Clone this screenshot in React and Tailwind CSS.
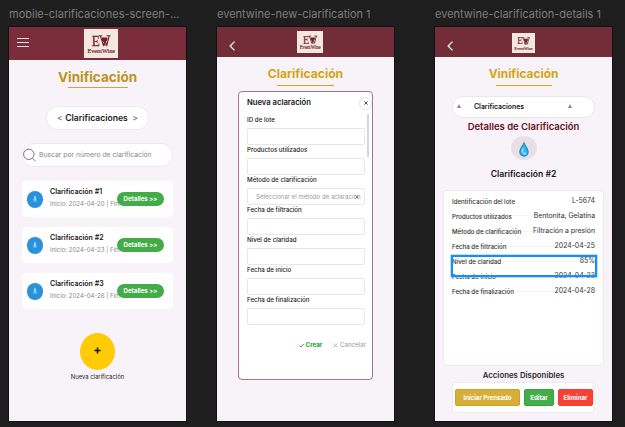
import React from "react";

function Logo({ className }) {
  return (
    <svg viewBox="0 0 34 29" preserveAspectRatio="none" className={className}>
      <rect width="34" height="29" fill="#f3e8df" />
      <text x="7.800" y="16.500" fontSize="15.500" fontFamily="Liberation Serif, serif" fill="#74202f" stroke="#74202f" strokeWidth=".3" textLength="8" lengthAdjust="spacingAndGlyphs">E</text>
      <path d="M14.800 6.700h3.500M22.500 6.700h4M16.300 6.700l3 9.500L21 12l1.800 4.200L25.300 6.700" fill="none" stroke="#74202f" strokeWidth="1.100" />
      <path d="M17.800 8.500h5.600c.5 3-.9 4.300-2.200 4.700v2.500h1v.8h-3.200v-.8h1v-2.500c-1.300-.4-2.700-1.700-2.200-4.700z" fill="#74202f" />
      <text x="3.500" y="24.300" fontSize="6.800" fontFamily="Liberation Serif, serif" fill="#74202f" stroke="#74202f" strokeWidth=".2" textLength="27.500" lengthAdjust="spacingAndGlyphs">EventWine</text>
    </svg>
  );
}

function Back() {
  return (
    <svg viewBox="0 0 6 10" className="mt-[14px] ml-[12px] mr-[1px] h-[10px] w-[6px]">
      <path d="M5.500 .6L1.100 5l4.400 4.400" fill="none" stroke="#fff" strokeWidth="1.200" />
    </svg>
  );
}

function Frame({ label, children }) {
  return (
    <section className="w-[177px] shrink-0">
      <div className="flex h-[27px] items-center pt-px text-[11px] whitespace-nowrap text-[#7d7d7d]">{label}</div>
      <div className="flex h-[394px] flex-col overflow-hidden bg-[#f8f2f9] shadow-[0_0_0_1px_#111]">{children}</div>
    </section>
  );
}

function Title({ children, className, line }) {
  return (
    <>
      <h1 className={"text-center font-bold whitespace-nowrap " + className}>{children}</h1>
      <div className={"mx-auto h-px shrink-0 " + line} />
    </>
  );
}

function ListCard({ n, date }) {
  return (
    <article className="flex h-[36px] items-center rounded-[5px] bg-white pl-[5px]">
      <div className="flex h-[17px] w-[16px] shrink-0 items-center justify-center rounded-full bg-[#2b91da]">
        <svg viewBox="0 0 6 9" className="mb-[1px] h-[9px] w-[6px]">
          <path d="M3 .5C3.300 3 5 4.500 5 6.200a2 2 0 0 1-4 0C1 4.500 2.700 3 3 .5z" fill="#49b8f5" />
          <path d="M3 2.200v4.300" stroke="#e3f7ff" strokeWidth=".9" />
        </svg>
      </div>
      <div className="mb-[3px] ml-[7px] w-[67px] shrink-0 whitespace-nowrap">
        <div className="h-[12px] text-[7px] leading-[11px] font-semibold text-[#151515]">Clarificación #{n}</div>
        <div className="h-[12px] text-[6.100px] leading-[12px] text-[#888]">Inicio: {date} | Fin:</div>
      </div>
      <button className="relative h-[14px] w-[47px] shrink-0 rounded-full bg-[#43ac49] text-[6.100px] font-bold text-white">Detalles &gt;&gt;</button>
    </article>
  );
}

function ListScreen() {
  return (
    <>
      <header className="flex h-[33px] shrink-0 bg-[#7b2d3b]">
        <div className="mt-[11px] ml-[8px] flex h-[9px] w-[12px] flex-col justify-between">
          <i className="h-px bg-[#eadadd]" />
          <i className="h-px bg-[#eadadd]" />
          <i className="h-px bg-[#eadadd]" />
        </div>
        <Logo className="mt-[2px] ml-[55px] h-[29px] w-[34px]" />
      </header>
      <Title className="mt-[8px] h-[19px] text-[13.500px] leading-[18px] text-[#bd9322]" line="w-[60px] bg-[#c9a449]">Vinificación</Title>
      <div className="mx-auto mt-[18px] flex h-[24px] w-[103px] shrink-0 items-center justify-center gap-[2.500px] rounded-full border border-[#f0ebf0] bg-white pt-px text-[8.600px] font-semibold text-[#181818]">
        <span className="font-normal text-[#555]">&lt;</span>
        Clarificaciones
        <span className="ml-[2px] font-normal text-[#555]">&gt;</span>
      </div>
      <div className="mt-[13px] ml-[13px] flex h-[24px] w-[151px] shrink-0 items-center rounded-full border border-[#eee8ee] bg-white">
        <svg viewBox="0 0 13 14" className="h-[14px] w-[13px] shrink-0">
          <circle cx="5.800" cy="6.300" r="5.200" fill="none" stroke="#666" strokeWidth=".9" />
          <path d="M9.500 10.200l3 3" stroke="#666" strokeWidth=".9" />
        </svg>
        <span className="ml-[3px] text-[6.800px] whitespace-nowrap text-[#888]">Buscar por número de clarificación</span>
      </div>
      <div className="mt-[14px] ml-[13px] flex w-[151px] flex-col gap-[10px]">
        <ListCard n="1" date="2024-04-20" />
        <ListCard n="2" date="2024-04-23" />
        <ListCard n="3" date="2024-04-26" />
      </div>
      <button className="mx-auto mt-[24px] flex h-[37px] w-[35px] shrink-0 items-center justify-center rounded-[50%] bg-[#ffcb05]">
        <svg viewBox="0 0 8 8" className="mb-[3px] h-[7px] w-[7px]"><path d="M4 .5v7M.5 4h7" stroke="#151515" strokeWidth="1.700" /></svg>
      </button>
      <div className="mt-[2px] text-center text-[5.900px] leading-[10px] text-[#222]">Nueva clarificación</div>
    </>
  );
}

function Field({ label, placeholder }) {
  return (
    <label className="block h-[30px]">
      <span className="block h-[14px] text-[6.200px] leading-[12px] font-medium text-[#222]">{label}</span>
      <span className="flex h-[17px] w-[118px] items-center rounded-[2px] border border-[#e7e7e7] bg-white pl-[8px] text-[6.100px] whitespace-nowrap text-[#999]">
        {placeholder && (
          <>
            <span className="w-[99px] shrink-0">{placeholder}</span>
            <svg viewBox="0 0 4 4" className="h-[4px] w-[4px] shrink-0"><path d="M.5 .5l3 3M3.500 .5l-3 3" stroke="#666" strokeWidth=".8" /></svg>
          </>
        )}
      </span>
    </label>
  );
}

function FormScreen() {
  return (
    <>
      <header className="flex h-[30px] shrink-0 bg-[#722d38]">
        <Back />
        <Logo className="mt-[4px] ml-[61px] h-[22px] w-[26px]" />
      </header>
      <Title className="mt-[8px] h-[20px] text-[12.100px] leading-[18px] text-[#d3a413]" line="w-[57px] bg-[#d3a413]">Clarificación</Title>
      <div className="mt-[5px] ml-[21px] h-[289px] w-[135px] shrink-0 rounded-[4px] border border-[#ab7480] bg-white">
        <div className="flex h-[22px] items-center justify-between pl-[8px]">
          <h2 className="mb-[1px] text-[7.650px] font-semibold whitespace-nowrap text-[#151515]">Nueva aclaración</h2>
          <span className="flex h-[13px] w-[13px] items-center justify-center rounded-full border border-[#e2e2e2] bg-white">
            <svg viewBox="0 0 4 4" className="h-[4px] w-[4px]"><path d="M.4 .4l3.200 3.200M3.600 .4L.4 3.600" stroke="#222" strokeWidth=".8" /></svg>
          </span>
        </div>
        <div className="flex">
          <div className="ml-[8px] w-[118px] shrink-0">
            <Field label="ID de lote" />
            <Field label="Productos utilizados" />
            <Field label="Método de clarificación" placeholder="Seleccionar el método de aclaración" />
            <Field label="Fecha de filtración" />
            <Field label="Nivel de claridad" />
            <Field label="Fecha de inicio" />
            <Field label="Fecha de finalización" />
          </div>
          <div className="ml-[2px] h-[43px] w-[2px] rounded-full bg-[#d5d5d5]" />
        </div>
        <div className="mt-[16px] mr-[6px] flex h-[10px] items-center justify-end text-[6.200px]">
          <svg viewBox="0 0 5 5" className="mr-[1.500px] h-[5px] w-[5px]"><path d="M.4 2.600l1.400 1.400L4.700 1" fill="none" stroke="#22a32b" strokeWidth="1" /></svg>
          <span className="font-bold text-[#22a32b]">Crear</span>
          <svg viewBox="0 0 5 5" className="mr-[1.500px] ml-[11px] h-[5px] w-[5px]"><path d="M.4 .4l4.200 4.200M4.600 .4L.4 4.600" stroke="#999" strokeWidth=".6" /></svg>
          <span className="text-[#999]">Cancelar</span>
        </div>
      </div>
    </>
  );
}

function DetailRow({ label, value }) {
  return (
    <div className="flex h-[15.100px] items-center justify-between bg-[linear-gradient(#f4f4f4,#f4f4f4)] bg-[length:100%_1px] bg-[position:0_45%] bg-no-repeat whitespace-nowrap text-[#333] first:bg-none">
      <span className="text-[6.150px] font-medium">{label}</span>
      <span className="mb-[1px] text-[6.900px]">{value}</span>
    </div>
  );
}

function DetailScreen() {
  return (
    <>
      <header className="flex h-[30px] shrink-0 bg-[#722d38]">
        <Back />
        <Logo className="mt-[6px] ml-[58px] h-[20px] w-[23px]" />
      </header>
      <Title className="mt-[8px] h-[20px] text-[11.900px] leading-[18px] text-[#d3a413]" line="w-[56px] bg-[#d3a413]">Vinificación</Title>
      <div className="mt-[10px] ml-[17px] flex h-[22px] w-[143px] shrink-0 items-center rounded-full border border-[#ebe6ec] bg-white pl-[4px]">
        <svg viewBox="0 0 4 4" className="mb-[3px] h-[4px] w-[4px]"><path d="M2 0l2 4H0z" fill="#888" /></svg>
        <span className="ml-[13px] w-[50px] text-[6.900px] font-semibold whitespace-nowrap text-[#151515]">Clarificaciones</span>
        <svg viewBox="0 0 4 4" className="mb-[3px] ml-[44px] h-[4px] w-[4px]"><path d="M2 0l2 4H0z" fill="#888" /></svg>
      </div>
      <h2 className="mt-[2px] text-center text-[9.500px] leading-[14px] font-semibold whitespace-nowrap text-[#641321]">Detalles de Clarificación</h2>
      <div className="mx-auto mt-[2px] flex h-[24px] w-[26px] shrink-0 items-center justify-center rounded-[50%] bg-[#eadfe6]">
        <svg viewBox="0 0 10 16" className="mt-[1px] h-[16px] w-[10px]">
          <path d="M5 .3C5.800 4 9.700 7.300 9.700 11a4.700 4.700 0 0 1-9.400 0C.3 7.300 4.200 4 5 .3z" fill="#168acb" />
          <path d="M5 2.500c.7 3 3.400 5.700 3.400 8.300a3.400 3.400 0 0 1-6.800 0C1.600 8.300 4.300 5.500 5 2.500z" fill="#37b5ef" />
          <path d="M4.300 6.500C3 8.300 2.300 9.800 2.700 11.800c1 .5 2-2.800 1.600-5.300z" fill="#b8edff" />
          <ellipse cx="5.600" cy="12.600" rx="2" ry="1.300" fill="#73d7fa" />
        </svg>
      </div>
      <h3 className="mt-[7px] text-center text-[8.600px] leading-[14px] font-semibold text-[#151515]">Clarificación #2</h3>
      <div className="relative mt-[9px] ml-[8px] h-[176px] w-[161px] shrink-0 rounded-[4px] border border-[#ece8ee] bg-white pt-[3px] pr-[8px] pl-[8px]">
        <DetailRow label="Identificación del lote" value="L-5674" />
        <DetailRow label="Productos utilizados" value="Bentonita, Gelatina" />
        <DetailRow label="Método de clarificación" value="Filtración a presión" />
        <DetailRow label="Fecha de filtración" value="2024-04-25" />
        <DetailRow label="Nivel de claridad" value="85%" />
        <DetailRow label="Fecha de inicio" value="2024-04-23" />
        <DetailRow label="Fecha de finalización" value="2024-04-28" />
        <div className="absolute top-[64px] left-[7px] h-[22px] w-[146px] border-2 border-[#168ff5] shadow-[0_0_0_0.5px_#7cc1fa]" />
      </div>
      <h3 className="mt-[2px] text-center text-[7.850px] leading-[14px] font-semibold text-[#2b2b2b]">Acciones Disponibles</h3>
      <div className="ml-[17px] flex h-[31px] w-[142px] shrink-0 items-center gap-[4px] rounded-[3px] border border-[#eeeaf0] bg-white pl-[2px] text-[6.100px] font-bold whitespace-nowrap text-white">
        <button className="h-[17px] w-[65px] rounded-[2px] border border-[#c9a22b] bg-[#d6ae38]">Iniciar Prensado</button>
        <button className="h-[17px] w-[30px] rounded-[2px] border border-[#35a33f] bg-[#43ad4c]">Editar</button>
        <button className="h-[17px] w-[35px] rounded-[2px] border border-[#fa3b30] bg-[#f44336]">Eliminar</button>
      </div>
    </>
  );
}

export default function App() {
  return (
    <main className="flex h-[427px] w-[625px] overflow-hidden bg-[#1e1e1e] pl-[9px] font-['Inter',sans-serif]">
      <Frame label="mobile-clarificaciones-screen-..."><ListScreen /></Frame>
      <div className="w-[31px] shrink-0" />
      <Frame label="eventwine-new-clarification 1"><FormScreen /></Frame>
      <div className="w-[41px] shrink-0" />
      <Frame label="eventwine-clarification-details 1"><DetailScreen /></Frame>
    </main>
  );
}
